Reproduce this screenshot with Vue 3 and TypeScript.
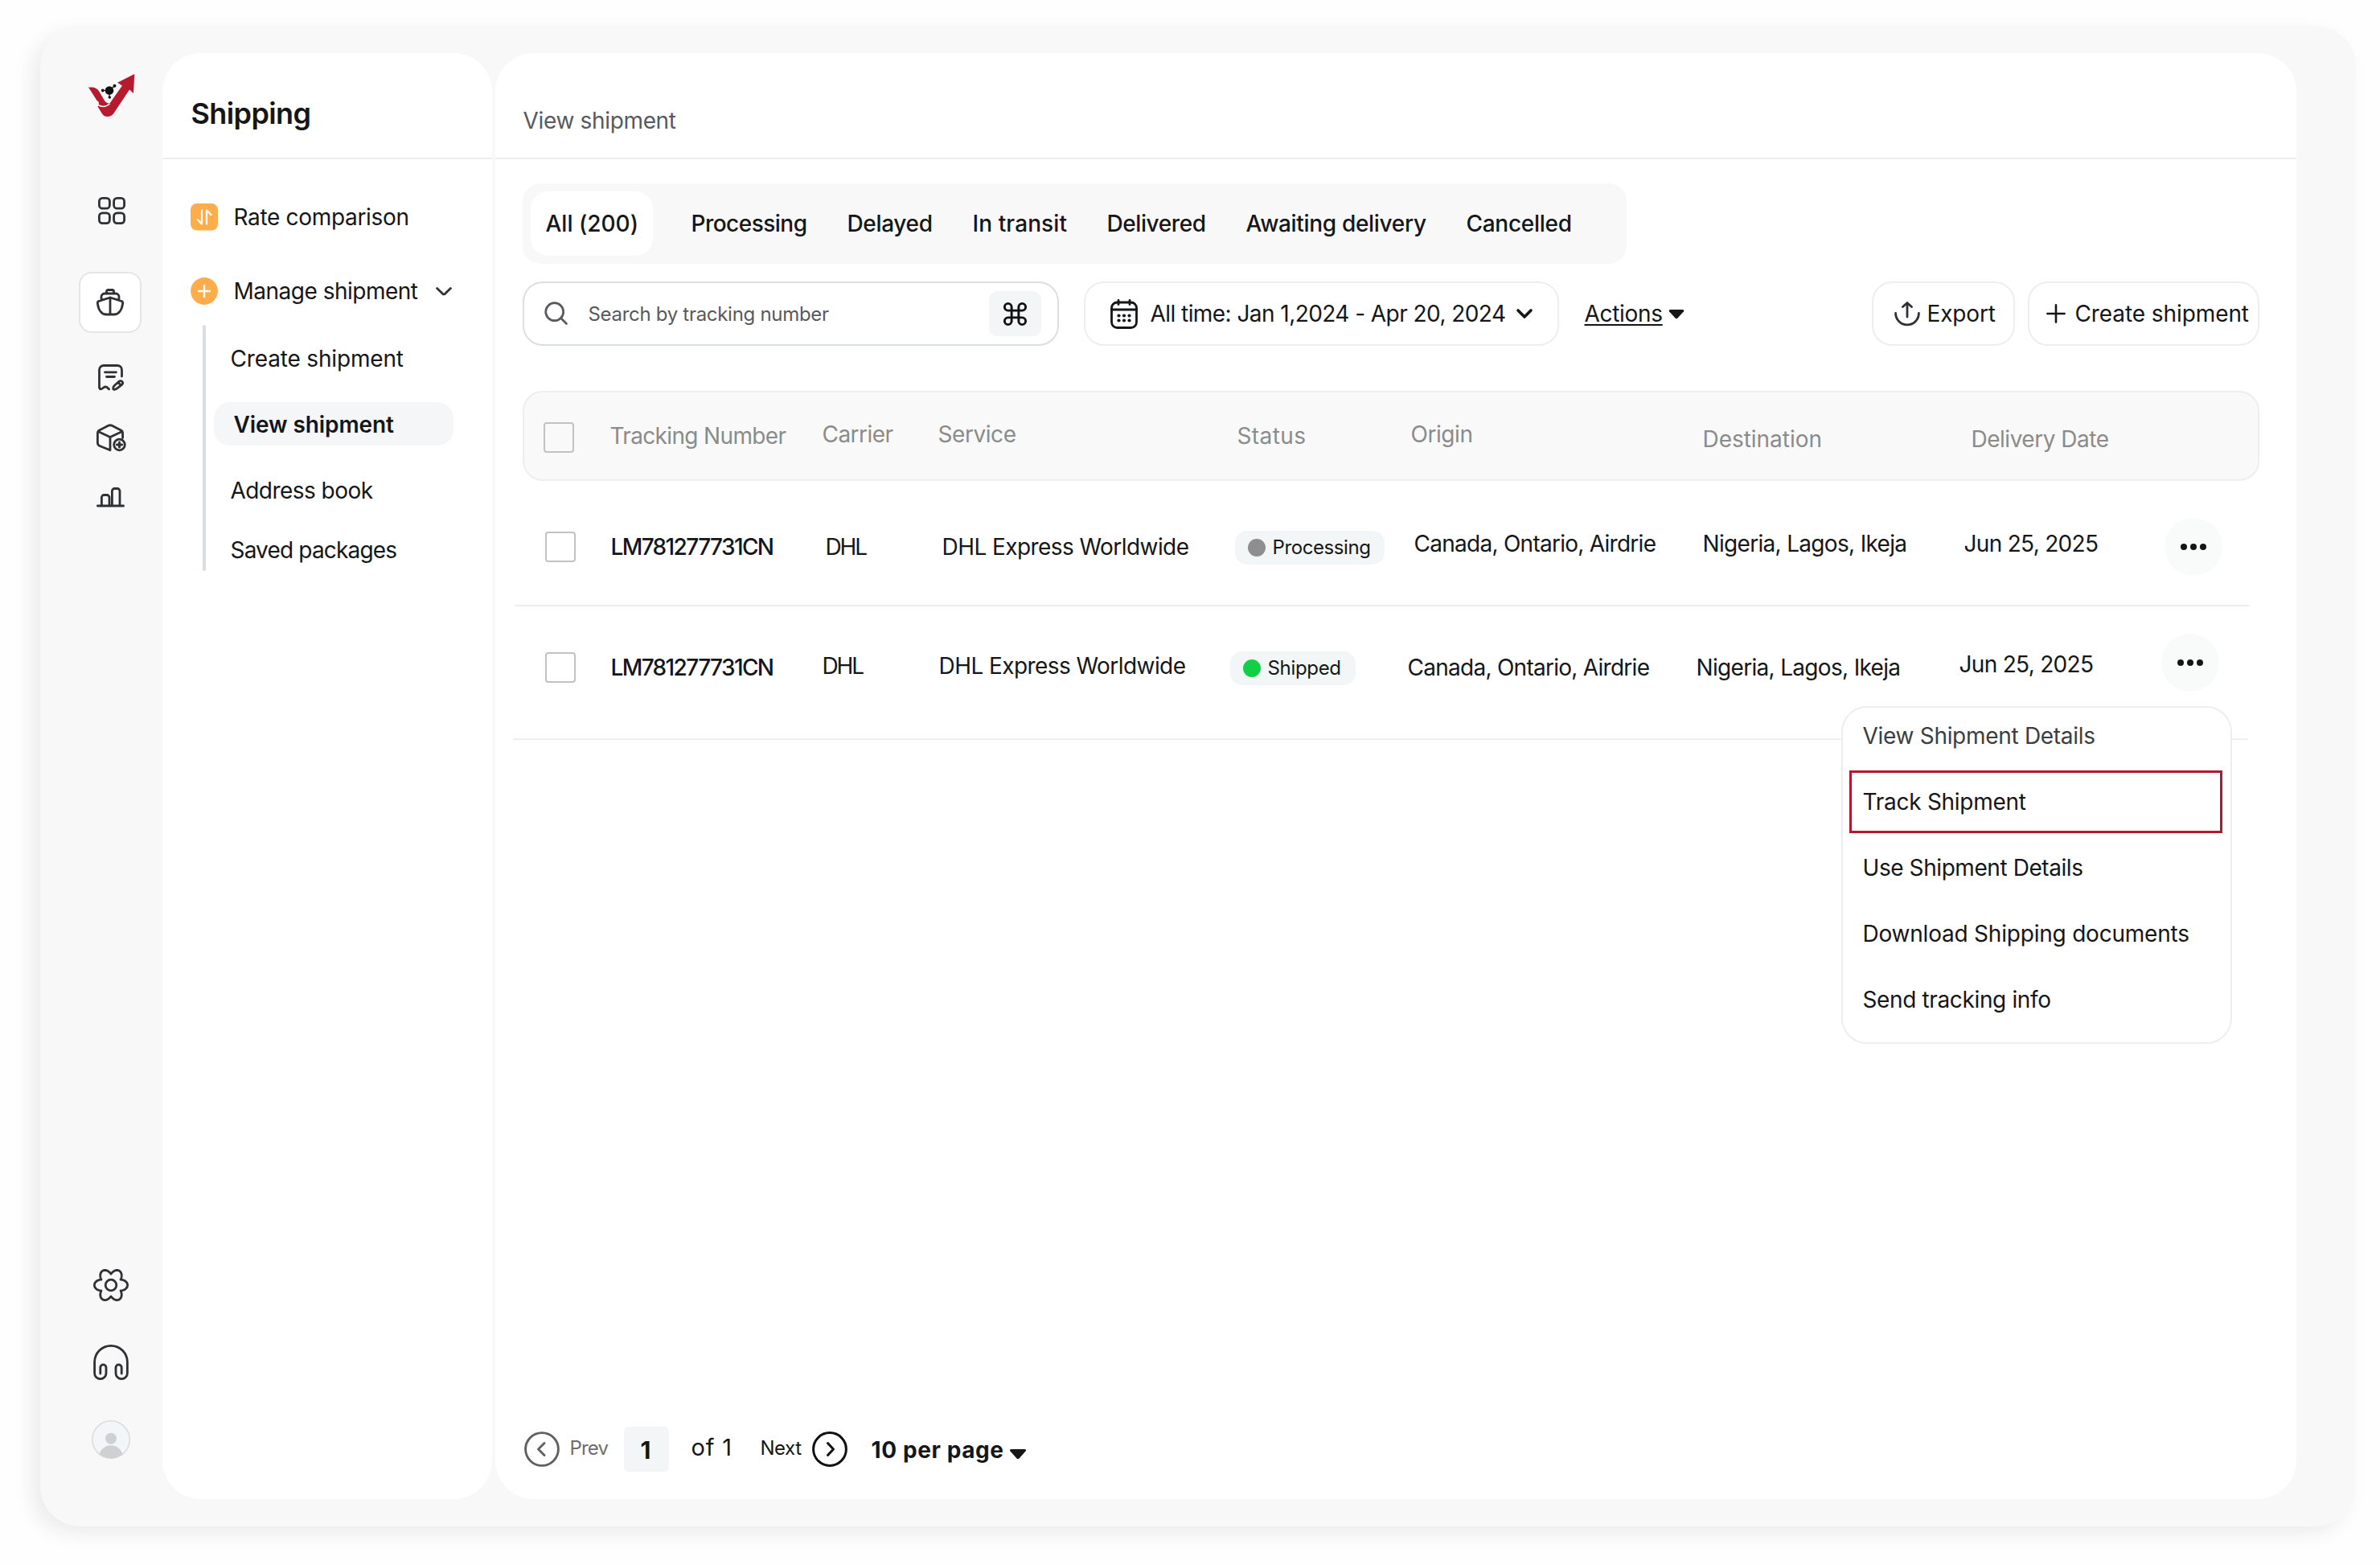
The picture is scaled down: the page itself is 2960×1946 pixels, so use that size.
<script setup lang="ts">
import type { Directive } from 'vue'

/* Tracks a label out (or in) so that it fills the given width in px. */
const INSET = 1.5
const fit = (el: HTMLElement, width: number) => {
  el.style.letterSpacing = '0px'
  const range = document.createRange()
  range.selectNodeContents(el)
  const natural = range.getBoundingClientRect().width
  const count = (el.textContent ?? '').trim().length
  if (count > 1) el.style.letterSpacing = `${((width - INSET - natural) / (count - 1)).toFixed(3)}px`
  el.style.width = `${width}px`
}
const vFit: Directive<HTMLElement, number> = {
  mounted: (el, binding) => fit(el, binding.value),
}

interface Cell { x: number; top: number; w: number; text: string }
interface Row {
  check: { x: number; top: number }
  cells: Cell[]
  status: { x: number; top: number; w: number; textW: number; text: string; tone: string }
  more: { x: number; top: number }
  left: number
}

const tabs = [
  { text: 'Processing', w: 146 },
  { text: 'Delayed', w: 108 },
  { text: 'In transit', w: 119 },
  { text: 'Delivered', w: 125 },
  { text: 'Awaiting delivery', w: 226 },
  { text: 'Cancelled', w: 133 },
]

const head: Cell[] = [
  { x: 757, top: 34, w: 221, text: 'Tracking Number' },
  { x: 1021, top: 32, w: 90, text: 'Carrier' },
  { x: 1165, top: 32, w: 99, text: 'Service' },
  { x: 1537, top: 34, w: 87, text: 'Status' },
  { x: 1753, top: 32, w: 79, text: 'Origin' },
  { x: 2116, top: 38, w: 150, text: 'Destination' },
  { x: 2450, top: 38, w: 173, text: 'Delivery Date' },
]

const rows: Row[] = [
  {
    left: 640,
    check: { x: 678, top: 63 },
    cells: [
      { x: 758, top: 62, w: 205, text: 'LM781277731CN' },
      { x: 1025, top: 62, w: 54, text: 'DHL' },
      { x: 1170, top: 62, w: 309, text: 'DHL Express Worldwide' },
      { x: 1757, top: 58, w: 303, text: 'Canada, Ontario, Airdrie' },
      { x: 2116, top: 58, w: 256, text: 'Nigeria, Lagos, Ikeja' },
      { x: 2441, top: 58, w: 169, text: 'Jun 25, 2025' },
    ],
    status: { x: 1536, top: 62, w: 186, textW: 124, text: 'Processing', tone: 'pending' },
    more: { x: 2692, top: 46 },
  },
  {
    left: 638,
    check: { x: 678, top: 57 },
    cells: [
      { x: 758, top: 56, w: 205, text: 'LM781277731CN' },
      { x: 1021, top: 54, w: 54, text: 'DHL' },
      { x: 1166, top: 54, w: 309, text: 'DHL Express Worldwide' },
      { x: 1749, top: 56, w: 303, text: 'Canada, Ontario, Airdrie' },
      { x: 2108, top: 56, w: 256, text: 'Nigeria, Lagos, Ikeja' },
      { x: 2435, top: 52, w: 169, text: 'Jun 25, 2025' },
    ],
    status: { x: 1530, top: 56, w: 156, textW: 93, text: 'Shipped', tone: 'shipped' },
    more: { x: 2688, top: 34 },
  },
]

const columns = (start: number, xs: number[]) =>
  xs.map((x, i) => `${x - (i ? xs[i - 1] : start)}px`).join(' ') + ' auto'

const headColumns = columns(652, [676, ...head.map((c) => c.x)])
const rowColumns = (r: Row) =>
  columns(r.left, [
    r.check.x,
    ...r.cells.slice(0, 3).map((c) => c.x),
    r.status.x,
    ...r.cells.slice(3).map((c) => c.x),
    r.more.x,
  ])

const menu = [
  { text: 'View Shipment Details', w: 291, soft: true },
  { text: 'Track Shipment', w: 205, marked: true },
  { text: 'Use Shipment Details', w: 276 },
  { text: 'Download Shipping documents', w: 408 },
  { text: 'Send tracking info', w: 236 },
]

/* Six-toothed cog outline, sampled around the circle. */
const gear =
  Array.from({ length: 180 }, (_, i) => {
    const a = (i / 180) * Math.PI * 2
    const r = 13.9 + 6.7 * Math.pow(0.5 + 0.5 * Math.cos(6 * a), 0.5)
    return `${i ? 'L' : 'M'}${(22 + r * Math.cos(a)).toFixed(2)} ${(21 + r * Math.sin(a)).toFixed(2)}`
  }).join('') + 'Z'
</script>

<template>
  <div class="page">
    <div class="frame">
      <nav class="rail">
        <svg class="logo" width="60" height="54" viewBox="0 0 60 54">
          <path fill="#b71a2e" d="M0 16.500H5Q10.500 17 13.500 22L19 31.500Q22 37 26.500 36.500L42 14.500L36 10.800L57.300 0L56 24L51 19.400L31 49.500Q28 53 23.500 53Q19.500 53 17 49.500L11.500 40.500Q15 35 10.500 33Z" />
          <path fill="none" stroke="#f8f8f8" stroke-width="1.500" d="M11.500 38.500Q20 43 26.500 37" />
          <path fill="none" stroke="#111" stroke-width="1.200" d="M18 20.500H26L32.500 14.700M26 20.500V29" />
          <circle cx="26" cy="20.500" r="5.300" fill="#111" /><circle cx="17.800" cy="20.500" r="1.900" fill="#111" />
          <circle cx="32.500" cy="14.800" r="2" fill="#111" /><circle cx="26.300" cy="29" r="1.800" fill="#111" />
        </svg>
        <svg class="i grid" width="34" height="34" viewBox="0 0 34 34">
          <rect x="1.400" y="1.400" width="13" height="12.800" rx="4" /><rect x="19.600" y="1.400" width="13" height="12.800" rx="4" />
          <rect x="1.400" y="19.800" width="13" height="12.800" rx="4" /><rect x="19.600" y="19.800" width="13" height="12.800" rx="4" />
        </svg>
        <div class="current">
          <svg class="i" width="34" height="34" viewBox="0 0 34 34">
            <path d="M17 11L3 15.300Q1 16 1.400 18.500C2.600 27.500 7 32 12 32H22C27 32 31.400 27.500 32.600 18.500Q33 16 31 15.300ZM17 11V32M6 14V10A4 4 0 0 1 10 6H24A4 4 0 0 1 28 10V14M12.500 6V3.500A2 2 0 0 1 14.500 1.500H19.500A2 2 0 0 1 21.500 3.500V6" />
          </svg>
        </div>
        <svg class="i note" width="33" height="33" viewBox="0 0 33 33">
          <path d="M29.500 15V7A5.500 5.500 0 0 0 24 1.500H7A5.500 5.500 0 0 0 1.500 7V29C2.200 31.500 4.800 31 6.200 29.400C8 27.500 10.500 27.500 12 29.400L13.600 31M8.500 9.800H22.500M10.500 15.500H20.500M19.200 31.200C18.400 31 18.600 28 20 26.700L26 21.300C27.400 20.200 29.200 20.400 30 21.500C30.900 22.700 30.700 24.300 29.500 25.300L23.400 30.200C22.300 31.100 20.500 31.500 19.200 31.200ZM25 22.500L28.400 26" />
        </svg>
        <svg class="i box" width="37" height="35" viewBox="0 0 37 35">
          <path d="M17 32.800L4 27.500Q1.400 26.300 1.400 23.500V11.500Q1.400 9 3.600 7.900L14.600 2.300Q17 1.200 19.400 2.300L30.400 7.900Q32.600 9 32.600 11.500V17.500M2 9.500L17 16.500L32 9.500M17 16.500V32.800" />
          <circle cx="28.500" cy="26" r="6.800" /><path d="M28.500 22.800V29.200M25.300 26H31.700" />
        </svg>
        <svg class="i bars" width="36" height="27" viewBox="0 0 36 27">
          <path d="M1.400 24H33.600M6.400 24V13.500A3 3 0 0 1 9.400 10.500H13A3 3 0 0 1 16 13.500V24M19.400 24V5.500A3 3 0 0 1 22.400 2.500H26A3 3 0 0 1 29 5.500V24" />
        </svg>
        <svg class="i gear" width="44" height="43" viewBox="0 0 44 43">
          <path :d="gear" /><circle cx="22" cy="21" r="6.800" />
        </svg>
        <svg class="i phones" width="44" height="46" viewBox="0 0 44 46">
          <path d="M8.800 37V29.500A3.600 3.600 0 0 1 16 29.500V36.500A7.200 7.200 0 0 1 1.600 36.500V22.700A20.400 20.400 0 0 1 42.400 22.700V36.500A7.200 7.200 0 0 1 28 36.500V29.500A3.600 3.600 0 0 1 35.200 29.500V37" />
        </svg>
        <svg class="avatar" width="48" height="48" viewBox="0 0 48 48">
          <defs><clipPath id="disc"><circle cx="24" cy="24" r="23.500" /></clipPath></defs>
          <circle cx="24" cy="24" r="23.200" fill="#f2f6f8" stroke="#dadddf" stroke-width="1.600" />
          <g clip-path="url(#disc)" fill="#ced0d2"><circle cx="24" cy="22.800" r="7" /><circle cx="24" cy="46" r="14.800" /></g>
        </svg>
      </nav>

      <aside class="side">
        <header class="side-head"><h1 v-fit="151">Shipping</h1></header>
        <div class="link rate">
          <svg width="34" height="34" viewBox="0 0 34 34"><rect width="34" height="33.500" rx="8" fill="#ffac4a" /><path fill="none" stroke="#fff" stroke-width="2.200" stroke-linecap="round" stroke-linejoin="round" d="M14 8.500V25.500L8.500 20M20 25.500V8.500L25.500 14" /></svg>
          <span v-fit="220">Rate comparison</span>
        </div>
        <div class="link manage">
          <svg width="34" height="34" viewBox="0 0 34 34"><circle cx="17" cy="17" r="16.900" fill="#ffac4a" /><path stroke="#fff" stroke-width="2.400" stroke-linecap="round" d="M17 10V24M10 17H24" /></svg>
          <span v-fit="231">Manage shipment</span>
          <svg class="i chev" width="20" height="13" viewBox="0 0 20 13"><path d="M1.600 2.500L8.500 9.300Q10 10.500 11.500 9.300L18.400 2.500" /></svg>
        </div>
        <div class="tree">
          <div class="branch"></div>
          <ul>
            <li><span v-fit="217">Create shipment</span></li>
            <li class="on"><span v-fit="201">View shipment</span></li>
            <li class="addr"><span v-fit="179">Address book</span></li>
            <li class="saved"><span v-fit="209">Saved packages</span></li>
          </ul>
        </div>
      </aside>

      <main class="main">
        <header class="main-head"><span v-fit="192">View shipment</span></header>

        <div class="tabs">
          <div class="tab-on"><span v-fit="117">All (200)</span></div>
          <span v-for="t in tabs" :key="t.text" v-fit="t.w">{{ t.text }}</span>
        </div>

        <div class="tools">
          <div class="search">
            <svg width="30" height="30" viewBox="0 0 30 30" fill="none" stroke="#58595d" stroke-width="2.700" stroke-linecap="round"><circle cx="12.700" cy="12.700" r="11" /><path d="M20.500 20.500L27.500 27.500" /></svg>
            <span v-fit="301">Search by tracking number</span>
            <div class="key"><svg width="35" height="35" viewBox="0 0 24 24" fill="none" stroke="#111" stroke-width="2"><path d="M15 6v12a3 3 0 1 0 3-3H6a3 3 0 1 0 3 3V6a3 3 0 1 0-3 3h12a3 3 0 1 0-3-3" /></svg></div>
          </div>
          <div class="dates">
            <svg width="34" height="37" viewBox="0 0 34 37" fill="none" stroke="#151618" stroke-width="2.800" stroke-linecap="round">
              <rect x="1.500" y="4" width="31" height="31.500" rx="7" /><path d="M1.500 13H32.500M10 1.400V6.500M24 1.400V6.500" />
              <g fill="#151618" stroke="none"><circle v-for="n in 6" :key="n" :cx="10.500 + ((n - 1) % 3) * 6.500" :cy="n > 3 ? 26.500 : 20.500" r="2.100" /></g>
            </svg>
            <span v-fit="444">All time: Jan 1,2024 - Apr 20, 2024</span>
            <svg class="down" width="22" height="15" viewBox="0 0 22 15" fill="none" stroke="#151618" stroke-width="3.600" stroke-linecap="round" stroke-linejoin="round"><path d="M3 3L11 11L19 3" /></svg>
          </div>
          <span class="actions" v-fit="99">Actions</span>
          <svg class="tri" width="20" height="12" viewBox="0 0 20 12"><path fill="#151618" d="M2 0H18Q20 .5 19 2.200L11.500 10.500Q10 12 8.500 10.500L1 2.200Q0 .5 2 0Z" /></svg>
          <div class="button export">
            <svg class="i" width="32" height="31" viewBox="0 0 32 31"><path d="M16 19V2M10.500 6.500L16 1.500L21.500 6.500M1.600 14.500A14.400 14.400 0 0 0 30.400 14.500" /></svg>
            <span v-fit="87">Export</span>
          </div>
          <div class="button create">
            <svg width="24" height="24" viewBox="0 0 24 24"><path stroke="#151618" stroke-width="2.600" stroke-linecap="round" d="M12 1.400V22.600M1.400 12H22.600" /></svg>
            <span v-fit="218">Create shipment</span>
          </div>
        </div>

        <div class="thead" :style="{ gridTemplateColumns: headColumns }">
          <i></i>
          <div class="check-cell"><b class="check"></b></div>
          <div v-for="c in head" :key="c.text" :style="{ paddingTop: c.top + 'px' }"><span v-fit="c.w">{{ c.text }}</span></div>
        </div>

        <div v-for="(r, ri) in rows" :key="ri" class="row" :class="'row-' + ri" :style="{ gridTemplateColumns: rowColumns(r) }">
          <i></i>
          <div :style="{ paddingTop: r.check.top + 'px' }"><b class="check"></b></div>
          <div v-for="(c, ci) in r.cells.slice(0, 3)" :key="c.text" :class="{ strong: ci === 0 }" :style="{ paddingTop: c.top + 'px' }"><span v-fit="c.w">{{ c.text }}</span></div>
          <div :style="{ paddingTop: r.status.top + 'px' }">
            <div class="pill" :style="{ width: r.status.w + 'px' }"><b class="dot" :class="r.status.tone"></b><span v-fit="r.status.textW">{{ r.status.text }}</span></div>
          </div>
          <div v-for="c in r.cells.slice(3)" :key="c.text" :style="{ paddingTop: c.top + 'px' }"><span v-fit="c.w">{{ c.text }}</span></div>
          <div :style="{ paddingTop: r.more.top + 'px' }"><div class="more"><b></b><b></b><b></b></div></div>
        </div>

        <div class="menu">
          <div v-for="m in menu" :key="m.text" class="item" :class="{ soft: m.soft, marked: m.marked }"><span v-fit="m.w">{{ m.text }}</span></div>
        </div>

        <footer class="pager">
          <svg width="44" height="44" viewBox="0 0 44 44" fill="none" stroke="#5f6064" stroke-width="2.900" stroke-linecap="round" stroke-linejoin="round"><circle cx="22" cy="22" r="20.400" /><path d="M25 14.500L17.500 22L25 29.500" /></svg>
          <span class="prev" v-fit="50">Prev</span>
          <div class="num">1</div>
          <span class="of" v-fit="52">of 1</span>
          <span class="next" v-fit="53">Next</span>
          <svg class="fwd" width="44" height="44" viewBox="0 0 44 44" fill="none" stroke="#111" stroke-width="3" stroke-linecap="round" stroke-linejoin="round"><circle cx="22" cy="22" r="20.400" /><path d="M19.500 14.500L26.500 22L19.500 29.500" /></svg>
          <span class="per" v-fit="166">10 per page</span>
          <svg class="tri2" width="22" height="13" viewBox="0 0 22 13"><path fill="#151618" d="M2.500 0H19.500Q22 .5 20.500 2.500L12.500 11.500Q11 13 9.500 11.500L1.500 2.500Q0 .5 2.500 0Z" /></svg>
        </footer>
      </main>
    </div>
  </div>
</template>

<style>
body { margin: 0; background: #fefefe; }
</style>

<style scoped>
.page, .page * { box-sizing: border-box; }
.page {
  width: 2960px; height: 1946px; padding: 32px 30px 48px 50px; overflow: hidden;
  background: #fefefe; color: #151618;
  font: 400 28px/40px Inter, "Liberation Sans", sans-serif;
}
svg { display: block; flex: none; }
span, h1 { display: block; height: 40px; padding-left: 1.5px; line-height: 41px; white-space: nowrap; flex: none; }
.i { fill: none; stroke: #2f3135; stroke-width: 2.8; stroke-linecap: round; stroke-linejoin: round; }

.frame {
  display: flex; height: 1866px; border-radius: 50px; background: #f8f8f8;
  box-shadow: -10px 9px 24px rgba(0, 0, 0, .075);
}
.rail { width: 152px; padding-top: 60px; flex: none; }
.logo { margin-left: 60px; }
.grid { margin: 99px 0 0 72px; }
.current {
  display: flex; align-items: center; justify-content: center;
  width: 78px; height: 76px; margin: 59px 0 0 48px; padding-right: 1px;
  background: #fff; border: 2px solid #e3e5e7; border-radius: 16px;
}
.note { margin: 39px 0 0 72px; }
.box { margin: 41px 0 0 70px; }
.bars { margin: 43px 0 0 70px; }
.gear { margin: 945px 0 0 66px; }
.phones { margin: 51px 0 0 66px; }
.avatar { margin: 49px 0 0 64px; }

.side { width: 410px; height: 1798px; margin: 34px 4px 0 0; background: #fff; border-radius: 48px; flex: none; }
.side-head { height: 132px; padding: 55px 0 0 34px; border-bottom: 2px solid #eeeeee; }
h1 { margin: 0; font-size: 36px; font-weight: 600; }
.link { display: flex; align-items: center; height: 40px; padding-left: 35px; }
.link span { margin-left: 18px; }
.rate { margin-top: 52px; }
.manage { margin-top: 52px; }
.chev { margin-left: 22px; }
.tree { display: flex; margin-top: 22px; padding-left: 50px; }
.branch { width: 4px; height: 306px; border-radius: 2px; background: #dadee2; }
ul { list-style: none; margin: 0; padding: 22px 0 0 10px; }
li { padding-left: 19px; height: 40px; }
li.on { width: 298px; height: 54px; margin-top: 34px; padding: 8px 0 0 23px; border-radius: 20px; background: #f4f6f7; font-weight: 600; }
li.addr { margin-top: 36px; }
li.saved { margin-top: 34px; }

.main { position: relative; width: 2240px; height: 1798px; margin-top: 34px; background: #fff; border-radius: 48px; flex: none; }
.main-head { height: 132px; padding: 64px 0 0 33px; border-bottom: 2px solid #eeeeee; color: #58595d; }
.tabs { display: flex; align-items: center; gap: 48px; width: 1373px; height: 100px; margin: 30px 0 0 34px; padding-left: 10px; border-radius: 22px; background: #f8f8f8; font-weight: 450; }
.tab-on { width: 152px; height: 80px; padding: 20px 0 0 17px; margin-right: -2px; border-radius: 22px; background: #fff; }

.tools { display: flex; align-items: center; height: 80px; margin: 22px 0 0 34px; }
.search, .dates, .button { display: flex; align-items: center; height: 80px; border: 2px solid #eeeeee; border-radius: 25px; flex: none; }
.search { width: 667px; padding-left: 25px; border-color: #dcdfe2; color: #58595d; font-size: 24px; }
.search span { margin-left: 23px; }
.key { display: flex; align-items: center; justify-content: center; width: 65px; height: 56px; margin-left: 199px; padding-right: 1px; border-radius: 10px; background: #f2f6f7; }
.dates { width: 591px; margin-left: 31px; padding-left: 31px; }
.dates span { margin-left: 14px; }
.down { margin-left: 12px; }
.actions { margin-left: 30px; text-decoration: underline; text-decoration-thickness: 2px; text-underline-offset: 3px; }
.tri { margin: 2px 0 0 7px; }
.export { width: 178px; margin-left: 233px; padding-left: 26px; }
.export span { margin-left: 7px; }
.create { width: 288px; margin-left: 16px; padding-left: 21px; }
.create span { margin-left: 10px; }

.thead { display: grid; width: 2160px; height: 112px; margin: 56px 0 0 34px; border: 2px solid #eeeeee; border-radius: 25px; background: #f9f9f9; color: #8b8b8b; }
.check-cell { padding-top: 37px; }
.check { display: block; width: 38px; height: 38px; border: 2px solid #c2c2c2; border-radius: 4px; }
.row { display: grid; width: 2158px; border-bottom: 2px solid #eeeeee; }
.row-0 { height: 156px; margin-left: 24px; }
.row-1 { height: 166px; margin-left: 22px; }
.strong { font-weight: 450; }
.pill { display: flex; align-items: center; height: 42px; padding-left: 16px; border-radius: 15px; background: #f3f6f7; font-size: 24px; }
.pill span { margin-left: 7px; line-height: 40px; }
.dot { width: 22px; height: 22px; border-radius: 50%; }
.pending { background: #8e8e8e; }
.shipped { background: #10d045; }
.more { display: flex; align-items: center; justify-content: center; gap: 4px; width: 72px; height: 72px; border-radius: 50%; background: #f9fbfa; }
.more b { width: 8px; height: 8px; border-radius: 50%; background: #151618; }

/* Row menu, opened over the table */
.menu { position: absolute; left: 1674px; top: 812px; width: 486px; height: 420px; padding: 7px 8px 0; background: #fff; border: 2px solid #eeeeee; border-radius: 32px; }
.item { display: flex; align-items: center; height: 78px; margin-bottom: 4px; padding-left: 12px; border: 3px solid transparent; }
.item:first-child { height: 56px; margin-bottom: 15px; }
.item.soft { color: #3c3d40; }
.item.marked { border-color: #b5182d; width: 464px; }

.pager { display: flex; align-items: center; height: 56px; margin: 854px 0 0 36px; }
.prev, .next { font-size: 24px; line-height: 38px; }
.prev { margin-left: 11px; color: #6c6d71; }
.num { width: 56px; height: 56px; margin-left: 19px; border-radius: 6px; background: #f2f6f7; font-size: 30px; font-weight: 700; line-height: 58px; text-align: center; padding-right: 2px; }
.of { margin-left: 26px; font-size: 29px; line-height: 36px; }
.next { margin-left: 34px; }
.fwd { margin-left: 13px; }
.per { margin-left: 28px; font-weight: 700; line-height: 42px; }
.tri2 { margin: 13px 0 0 7px; }
</style>
